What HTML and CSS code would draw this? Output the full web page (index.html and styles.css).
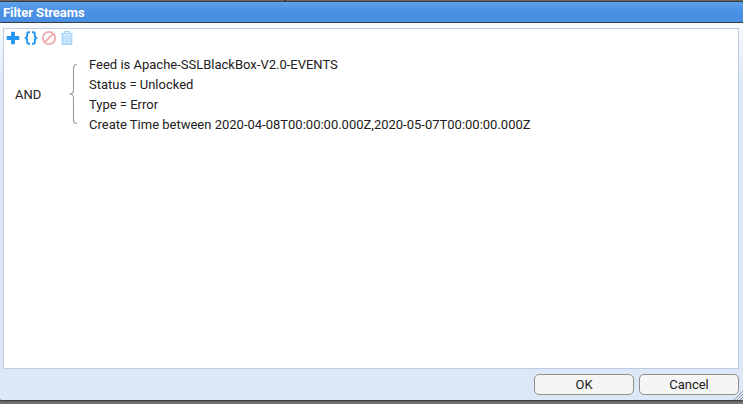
FILE: index.html
```html
<!DOCTYPE html>
<html lang="en">
<head>
<meta charset="utf-8">
<title>Filter Streams</title>
<link rel="stylesheet" href="styles.css">
</head>
<body>
<div class="divider"></div>
<div class="dialog">
  <header class="titlebar">Filter Streams</header>
  <main class="content">
    <section class="panel">
      <div class="toolbar">
        <svg class="icon" viewBox="0 0 16 16"><path d="M8 1.7v12.6M1.7 8h12.6" fill="none" stroke="#2196f3" stroke-width="3.8"/></svg>
        <svg class="icon" viewBox="0 0 16 16"><path d="M7 2.2H5.6Q4.2 2.2 4.2 3.6v2.9L2.6 8l1.6 1.5v2.9q0 1.4 1.4 1.4H7M9 2.2h1.4q1.4 0 1.4 1.4v2.9L13.4 8l-1.6 1.5v2.9q0 1.4-1.4 1.4H9" fill="none" stroke="#2196f3" stroke-width="1.9"/></svg>
        <svg class="icon" viewBox="0 0 16 16"><g fill="none" stroke="#eeacac" stroke-width="1.9"><circle cx="8" cy="8" r="6.1"/><path d="M12.2 3.8l-8.4 8.4"/></g></svg>
        <svg class="icon" viewBox="0 0 16 16"><g fill="none" stroke="#a6d5fa"><path d="M5.6 3V1.7h4.8V3" stroke-width="1.3"/><path d="M2 3.7h12" stroke-width="1.6"/><path d="M3.6 4v10.1h8.8V4" fill="#e2f1fd" stroke-width="1.8"/><path d="M6.1 5.2v7.6M8 5.2v7.6M9.9 5.2v7.6" stroke-width="1.1"/></g></svg>
      </div>
      <div class="expression">
        <div class="operator">AND</div>
        <svg class="brace" viewBox="0 0 9 62"><path d="M8 1.5Q4.5 1.5 4.5 5v22q0 4-4 4 4 0 4 4v22q0 3.5 3.5 3.5" fill="none" stroke="#999" stroke-width="1.1"/></svg>
        <div class="terms">
          <div>Feed is Apache-SSLBlackBox-V2.0-EVENTS</div>
          <div>Status = Unlocked</div>
          <div>Type = Error</div>
          <div>Create Time between 2020-04-08T00:00:00.000Z,2020-05-07T00:00:00.000Z</div>
        </div>
      </div>
    </section>
    <footer class="buttons">
      <button class="button">OK</button>
      <button class="button">Cancel</button>
    </footer>
  </main>
  <svg class="resize" viewBox="0 0 9 9"><path d="M0 9L9 0M3 9l6-6M6 9l3-3" stroke="#8a96a8" stroke-width="1"/></svg>
</div>
</body>
</html>
```
FILE: styles.css
```css
* { box-sizing: border-box; }
body {
  margin: 0;
  height: 404px;
  padding: 0 0 3px;
  overflow: hidden;
  background: linear-gradient(#666 0 400px, #626262 401px, #777 404px);
  font: 13px/20px Roboto, sans-serif;
  color: #212121;
}
.divider {
  width: 2px;
  height: 1px;
  margin-left: 284px;
  background: #3a3a3a;
}
.dialog {
  position: relative;
  display: flex;
  flex-direction: column;
  height: 400px;
  border: solid #3a3d42;
  border-width: 1px 0;
  border-radius: 2px;
  overflow: hidden;
}
.titlebar {
  flex: none;
  height: 21px;
  padding-left: 3px;
  border-bottom: 1px solid #3a3d42;
  background: linear-gradient(#5ca1ec, #4990e4 50%, #498fe3);
  color: #fff;
  font-weight: 700;
  letter-spacing: -0.06px;
  line-height: 21px;
}
.content {
  flex: 1;
  display: flex;
  flex-direction: column;
  padding: 5px 4px 4px 3px;
  background: linear-gradient(#f9fbfe, #dce8f7 60px);
}
.panel {
  height: 341px;
  border: 1px solid #c0cae3;
  background: #fff;
}
.toolbar {
  display: flex;
  gap: 2px;
  padding: 1px;
}
.icon { width: 16px; height: 16px; }
.expression {
  display: flex;
  align-items: center;
  margin-top: 8px;
  padding-left: 11px;
}
.operator { width: 54px; }
.brace { width: 9px; height: 62px; margin: 0 11px 2px 0; }
.terms { white-space: nowrap; }
.buttons {
  display: flex;
  justify-content: flex-end;
  gap: 5px;
  margin-top: 5px;
}
.button {
  width: 100px;
  height: 21px;
  padding: 0;
  border: 1px solid #918e8c;
  border-radius: 5px;
  background: #f5f5f5;
  color: #212121;
  font: 13px/19px Roboto, sans-serif;
}
.resize {
  position: absolute;
  right: 0;
  bottom: 0;
  width: 9px;
  height: 9px;
}
```
